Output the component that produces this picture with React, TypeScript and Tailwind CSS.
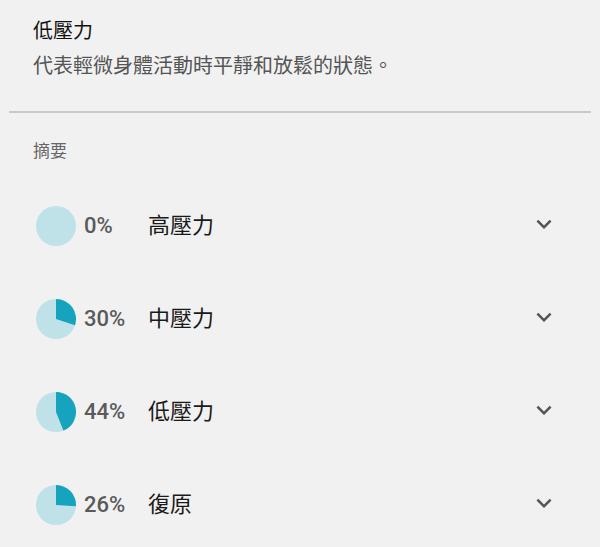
const rows = [
  { pct: 0, label: '高壓力' },
  { pct: 30, label: '中壓力' },
  { pct: 44, label: '低壓力' },
  { pct: 26, label: '復原' },
]

const font = { fontFamily: 'Roboto, "Noto Sans CJK TC", sans-serif' }

function Pie({ pct }: { pct: number }) {
  const r = 20
  const a = (pct / 100) * Math.PI * 2
  const x = r + r * Math.sin(a)
  const y = r - r * Math.cos(a)
  const large = pct > 50 ? 1 : 0
  return (
    <svg width="40" height="40" viewBox="0 0 40 40">
      <circle cx="20" cy="20" r="20" fill="#bfe2e9" />
      {pct > 0 && (
        <path d={`M20 20 L20 0 A20 20 0 ${large} 1 ${x} ${y} Z`} fill="#15a3bd" />
      )}
    </svg>
  )
}

function ExpandMore() {
  return (
    <svg width="30" height="30" viewBox="0 0 24 24" fill="#555">
      <path d="M16.59 8.59L12 13.17 7.41 8.59 6 10l6 6 6-6z" />
    </svg>
  )
}

export default function App() {
  return (
    <div className="w-[600px] h-[547px] bg-[#f1f1f1] overflow-hidden" style={font}>
      <div className="px-[33px] pt-[16px]">
        <div className="text-[20px] leading-[30px] text-[#111]">低壓力</div>
        <div className="mt-[5px] text-[20px] leading-[30px] text-[#555]">
          代表輕微身體活動時平靜和放鬆的狀態。
        </div>
      </div>
      <div className="mx-[9px] mt-[30px] h-[2px] bg-[#c9c9c9]" />
      <div className="px-[33px] mt-[26px] text-[17px] leading-[24px] text-[#666]">摘要</div>
      <div className="mt-[16px]">
        {rows.map((r) => (
          <div key={r.label} className="h-[93px] flex items-center pl-[36px] pr-[41px]">
            <Pie pct={r.pct} />
            <div className="ml-[8px] w-[64px] text-[22px] font-medium text-[#5a5a5a]">{r.pct}%</div>
            <div className="flex-1 text-[22px] text-[#1a1a1a]">{r.label}</div>
            <div className="mb-[3px]">
              <ExpandMore />
            </div>
          </div>
        ))}
      </div>
    </div>
  )
}
